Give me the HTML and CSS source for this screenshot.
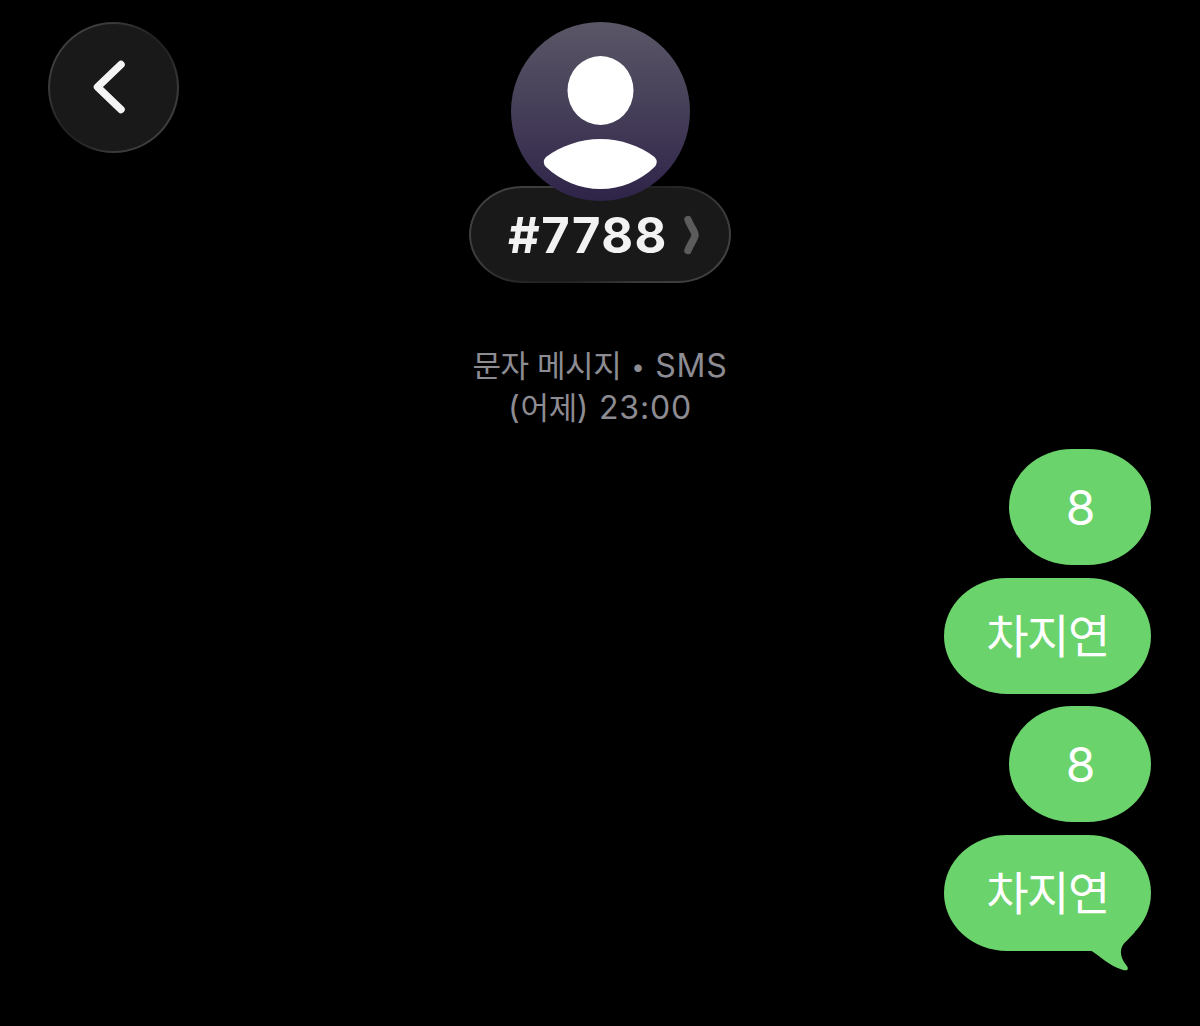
FILE: index.html
```html
<!DOCTYPE html>
<html lang="ko">
<head>
    <meta charset="UTF-8">
    <meta name="viewport" content="width=device-width, initial-scale=1.0">
    <title>#7788</title>
    <link rel="stylesheet" href="styles.css">
</head>
<body>
    <header class="chat-header">
        <button class="back-button" aria-label="뒤로">
            <svg width="40" height="60" viewBox="0 0 40 60">
                <path d="M31 7.5 L7.5 30 L31 52.5" />
            </svg>
        </button>

        <div class="contact">
            <svg class="avatar" viewBox="0 0 179 179">
                <defs>
                    <linearGradient id="avatarFill" x1="0" y1="0" x2="0" y2="1">
                        <stop offset="0" stop-color="#5a5666" />
                        <stop offset="0.5" stop-color="#453e58" />
                        <stop offset="1" stop-color="#2f2449" />
                    </linearGradient>
                </defs>
                <circle cx="89.5" cy="89.5" r="89.5" fill="url(#avatarFill)" />
                <ellipse cx="89.5" cy="68.5" rx="33" ry="34.5" fill="#fff" />
                <path d="M89.5 117 C110 117 129 124 143.5 135 Q148 140 143.5 145 C129 159 110 167 89.5 167 C69 167 50 159 35 145 Q30.5 140 35 135 C50 124 69 117 89.5 117 Z" fill="#fff" />
            </svg>
            <div class="contact-name">
                <span>#7788</span>
                <svg width="18" height="40" viewBox="0 0 18 40">
                    <path d="M5 4.5 C7 11 12 16 12 20 C12 24 7 29 5 35.5" />
                </svg>
            </div>
        </div>
    </header>

    <div class="timestamp">
        <div><span class="ko">문자 메시지</span> <span class="dot">•</span> SMS</div>
        <div>(<span class="ko">어제</span>) 23:00</div>
    </div>

    <main class="messages">
        <div class="message number">8</div>
        <div class="message">차지연</div>
        <div class="message number">8</div>
        <div class="message">
            차지연
            <svg class="tail" width="60" height="44" viewBox="0 0 60 44">
                <path d="M0 23.5 H6 C9 23.5 11 24.5 14 27 C22 33 32 41 42 43.2 C46 44 47 41.5 44.5 38.5 C37 29 37 20 45 13.5 L53 5 L40 0 H0 Z" />
            </svg>
        </div>
    </main>
</body>
</html>
```

FILE: styles.css
```css
* {
    margin: 0;
    padding: 0;
    box-sizing: border-box;
}

body {
    background-color: #000;
    color: white;
    font-family: Inter, 'Noto Sans CJK KR', sans-serif;
    padding: 22px 48px;
}

.chat-header {
    display: grid;
    grid-template-columns: 1fr auto 1fr;
    align-items: start;
}

.back-button,
.contact-name {
    border: 2px solid transparent;
    background:
        linear-gradient(#191919, #191919) padding-box,
        linear-gradient(135deg, #454545, #3a3a3a 25%, #222 45%, #222 55%, #3a3a3a 75%, #454545) border-box;
}

.back-button {
    display: flex;
    align-items: center;
    justify-content: center;
    width: 131px;
    height: 131px;
    border-radius: 50%;
    padding-right: 8px;
    padding-bottom: 1px;
}

.back-button path {
    fill: none;
    stroke: #f4f4f4;
    stroke-width: 7.5;
    stroke-linecap: round;
    stroke-linejoin: round;
}

.contact {
    display: flex;
    flex-direction: column;
    align-items: center;
}

.avatar {
    width: 179px;
    height: 179px;
    position: relative;
    z-index: 1;
}

.contact-name {
    display: flex;
    align-items: center;
    gap: 15px;
    width: 262px;
    height: 97px;
    margin-top: -15px;
    padding-left: 37px;
    border-radius: 53px / 48.5px;
    color: #f2f2f2;
    font-size: 49px;
    font-weight: 700;
    letter-spacing: 1.4px;
}

.contact-name span {
    padding-top: 2px;
}

.contact-name path {
    fill: none;
    stroke: #5c5c5c;
    stroke-width: 7.5;
    stroke-linecap: round;
}

.timestamp {
    margin-top: 62px;
    color: #8d8c93;
    text-align: center;
    font-size: 32px;
    line-height: 42px;
    letter-spacing: 0.8px;
}

.timestamp div {
    height: 42px;
}

.timestamp .ko {
    font-size: 31px;
    letter-spacing: -0.4px;
}

.timestamp .dot {
    font-size: 24px;
    vertical-align: 2px;
}

.messages {
    display: flex;
    flex-direction: column;
    align-items: flex-end;
    gap: 12.7px;
    margin-top: 20px;
}

.message {
    display: flex;
    align-items: center;
    justify-content: center;
    position: relative;
    width: 207px;
    height: 116px;
    margin-right: 1px;
    padding-bottom: 6px;
    border-radius: 63px / 58px;
    background-color: #6bd36b;
    font-size: 46px;
    letter-spacing: -1.5px;
}

.number {
    width: 142px;
    padding-bottom: 0;
    padding-left: 1px;
    font-size: 48px;
    letter-spacing: 0;
}

.tail {
    position: absolute;
    right: 9px;
    bottom: -20px;
    fill: #6bd36b;
}
```
